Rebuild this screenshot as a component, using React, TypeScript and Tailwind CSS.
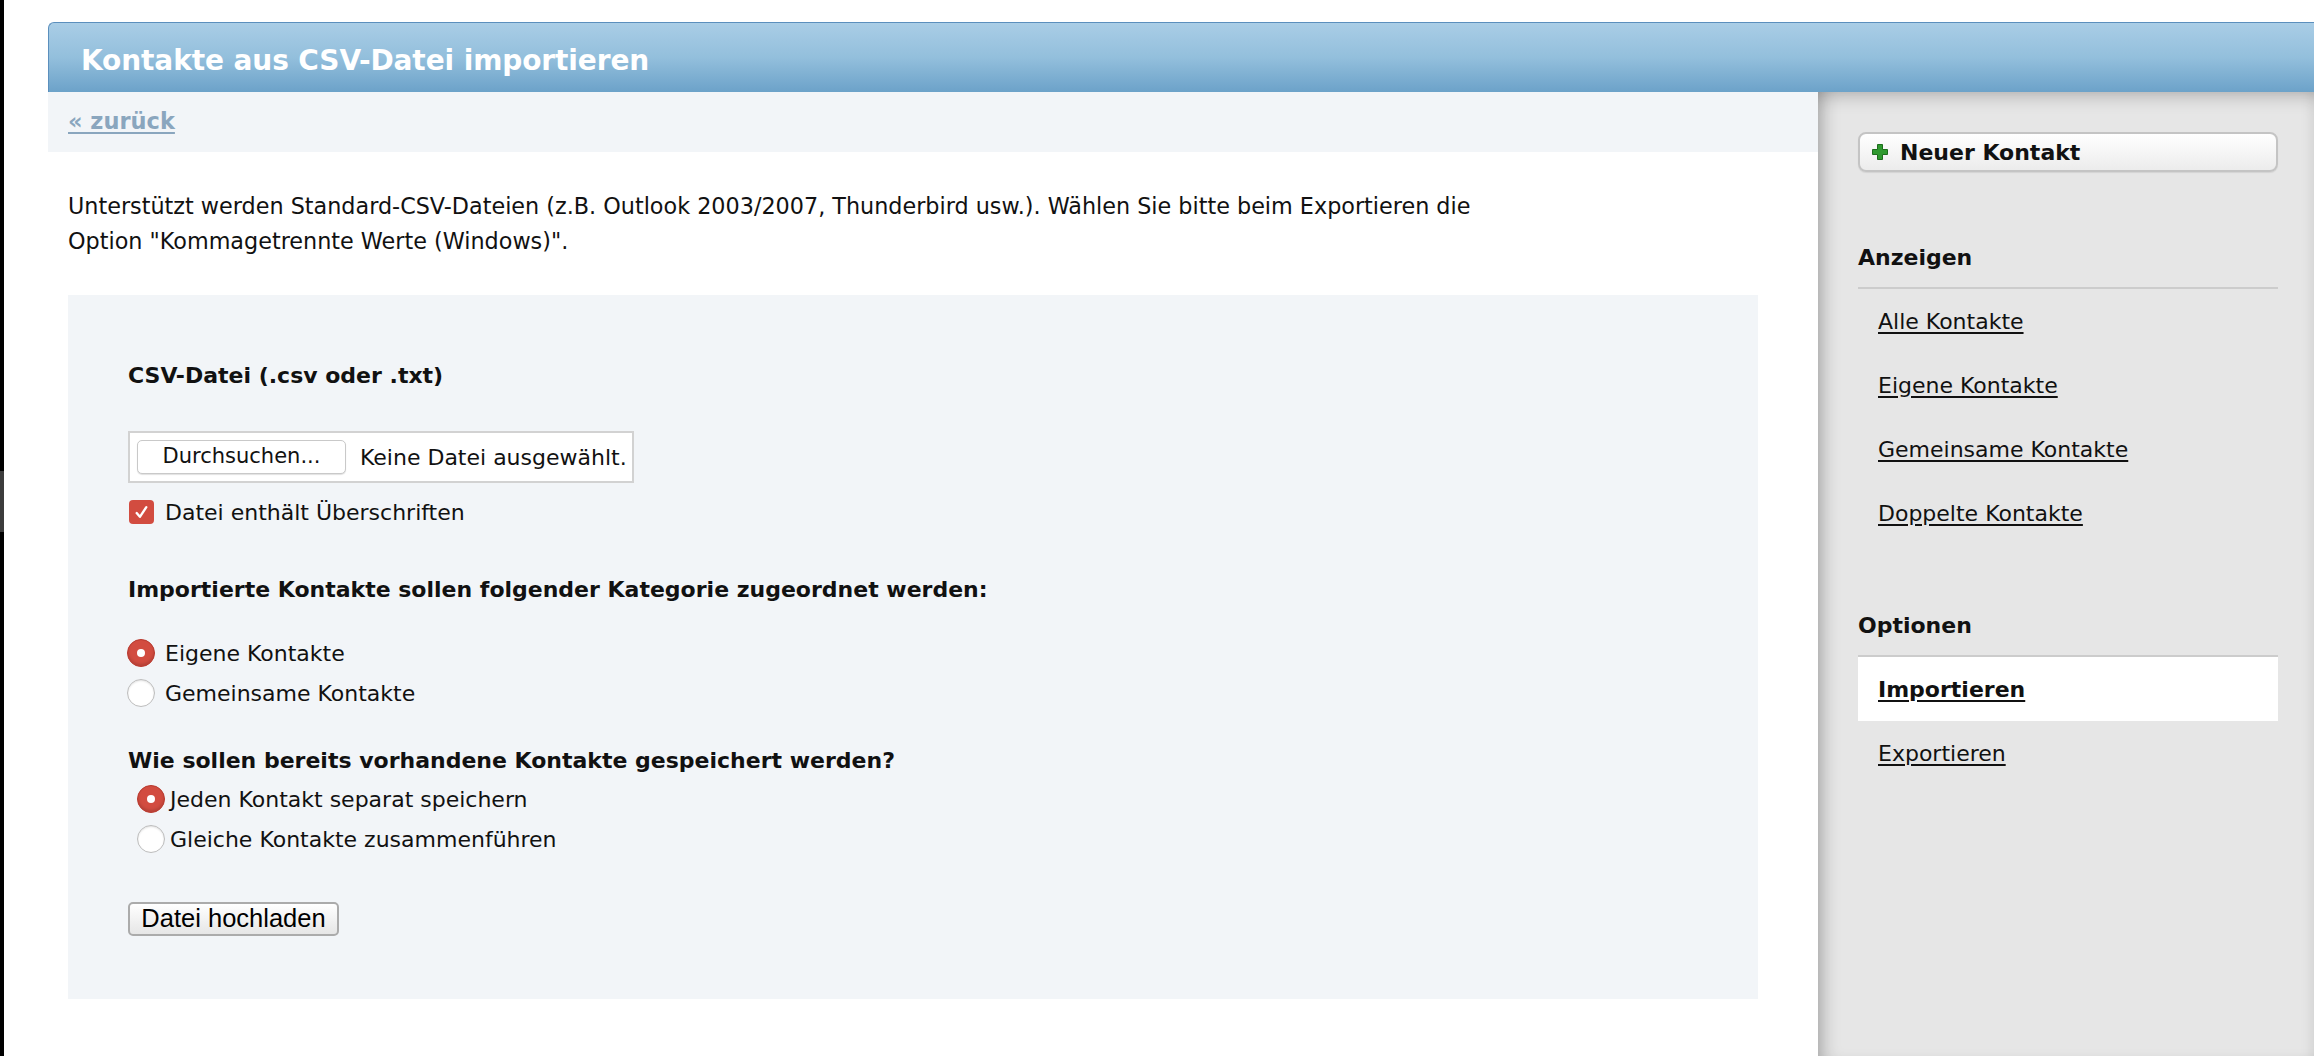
import React from 'react';

const base = "font-[family-name:'DejaVu_Sans',Verdana,sans-serif]";

function PlusIcon() {
  return (
    <svg width="18" height="18" viewBox="0 0 18 18" className="shrink-0">
      <path
        d="M6.5 1.5h5v5h5v5h-5v5h-5v-5h-5v-5h5z"
        fill="#2f9a2f"
        stroke="#1c6e1c"
        strokeWidth="1"
      />
    </svg>
  );
}

function Radio({ checked }: { checked?: boolean }) {
  if (checked) {
    return (
      <span className="w-[28px] h-[28px] rounded-full bg-[#d24c40] border border-[#b8392e] flex items-center justify-center shrink-0 shadow-[inset_0_-2px_3px_rgba(0,0,0,0.15)]">
        <span className="w-[8px] h-[8px] rounded-full bg-white" />
      </span>
    );
  }
  return (
    <span className="w-[28px] h-[28px] rounded-full bg-white border-[1.5px] border-[#bdbdbd] shrink-0 shadow-[inset_0_1px_2px_rgba(0,0,0,0.12)]" />
  );
}

function SideLink({ label, active }: { label: string; active?: boolean }) {
  return (
    <div className={`h-[64px] flex items-center pl-[20px] ${active ? 'bg-white' : ''}`}>
      <a href="#" className={`text-[22px] text-[#111] underline underline-offset-[3px] ${active ? 'font-bold' : ''}`}>
        {label}
      </a>
    </div>
  );
}

export default function App() {
  return (
    <div className={`${base} flex w-full min-h-[1056px] bg-white text-[#111]`}>
      <div className="w-[4px] flex flex-col shrink-0">
        <div className="h-[471px] bg-black" />
        <div className="h-[61px] bg-[#3c3c3c]" />
        <div className="flex-1 bg-black" />
      </div>

      <div className="ml-[44px] flex-1 flex flex-col pt-[22px]">
        <div className="h-[70px] rounded-tl-[6px] border-t border-l border-[#5b8fbd] bg-gradient-to-b from-[#a9cde6] via-[#93bfdc] to-[#6ca2c9] flex items-center pl-[32px] pt-[6px]">
          <h1 className="text-white font-bold text-[28px] leading-none tracking-[-0.1px]">Kontakte aus CSV-Datei importieren</h1>
        </div>

        <div className="flex flex-1">
          <div className="flex-1">
            <div className="h-[60px] bg-[#f2f5f8] flex items-center pl-[20px]">
              <a href="#" className="text-[22.5px] font-bold text-[#8aa6be] underline underline-offset-[3px]">
                « zurück
              </a>
            </div>

            <p className="mt-[37px] pl-[20px] text-[22.3px] leading-[35px]">
              Unterstützt werden Standard-CSV-Dateien (z.B. Outlook 2003/2007, Thunderbird usw.). Wählen Sie bitte beim Exportieren die
              <br />
              Option "Kommagetrennte Werte (Windows)".
            </p>

            <div className="mt-[36px] ml-[20px] w-[1690px] h-[704px] bg-[#f2f5f8] pl-[60px] pt-[66px]">
              <h2 className="text-[22px] leading-[30px] font-bold">CSV-Datei (.csv oder .txt)</h2>

              <div className="mt-[40px] w-[506px] h-[52px] border-2 border-[#d2d2d2] bg-white flex items-center pl-[7px] gap-[14px]">
                <div className="w-[209px] h-[34px] rounded-[5px] border border-[#c9c9c9] bg-white shadow-[0_1px_1px_rgba(0,0,0,0.12)] flex items-center justify-center text-[21px]">
                  Durchsuchen...
                </div>
                <span className="text-[22px] whitespace-nowrap">Keine Datei ausgewählt.</span>
              </div>

              <label className="mt-[14px] flex items-center h-[30px]">
                <span className="ml-[1px] w-[25px] h-[24px] rounded-[4px] bg-[#d24c40] flex items-center justify-center shrink-0">
                  <svg width="15" height="15" viewBox="0 0 14 14">
                    <path d="M2.5 7.5l3 3.5 6-9" fill="none" stroke="white" strokeWidth="2.2" strokeLinecap="round" strokeLinejoin="round" />
                  </svg>
                </span>
                <span className="ml-[11px] text-[22px]">Datei enthält Überschriften</span>
              </label>

              <h2 className="mt-[48px] text-[22px] leading-[30px] font-bold">
                Importierte Kontakte sollen folgender Kategorie zugeordnet werden:
              </h2>

              <div className="mt-[33px] flex flex-col gap-[10px]">
                <label className="flex items-center h-[30px] -ml-[1px]">
                  <Radio checked />
                  <span className="ml-[10px] text-[22px]">Eigene Kontakte</span>
                </label>
                <label className="flex items-center h-[30px] -ml-[1px]">
                  <Radio />
                  <span className="ml-[10px] text-[22px]">Gemeinsame Kontakte</span>
                </label>
              </div>

              <h2 className="mt-[38px] text-[22px] leading-[30px] font-bold">
                Wie sollen bereits vorhandene Kontakte gespeichert werden?
              </h2>

              <div className="mt-[8px] flex flex-col gap-[10px]">
                <label className="flex items-center h-[30px] ml-[9px]">
                  <Radio checked />
                  <span className="ml-[5px] text-[22px]">Jeden Kontakt separat speichern</span>
                </label>
                <label className="flex items-center h-[30px] ml-[9px]">
                  <Radio />
                  <span className="ml-[5px] text-[22px]">Gleiche Kontakte zusammenführen</span>
                </label>
              </div>

              <button className="mt-[48px] w-[211px] h-[34px] rounded-[5px] border-2 border-[#ababab] bg-gradient-to-b from-white to-[#e6e6e6] font-[family-name:'Liberation_Sans',Arial,sans-serif] text-[25.5px] leading-none text-black">
                Datei hochladen
              </button>
            </div>
          </div>

          <aside className="w-[496px] shrink-0 bg-[#e6e6e6] pl-[40px] pr-[36px] pt-[40px] shadow-[inset_16px_0_18px_-12px_rgba(0,0,0,0.28),inset_0_16px_18px_-12px_rgba(0,0,0,0.22),inset_-14px_0_14px_-12px_rgba(0,0,0,0.08)]">
            <button className="w-full h-[40px] rounded-[8px] border-2 border-[#c4c4c4] bg-gradient-to-b from-white to-[#ececec] flex items-center pl-[11px] gap-[11px] shadow-[0_1px_1px_rgba(0,0,0,0.08)]">
              <PlusIcon />
              <span className="text-[22px] font-bold text-[#111]">Neuer Kontakt</span>
            </button>

            <h3 className="mt-[71px] text-[22px] leading-[30px] font-bold pb-[14px] border-b-2 border-[#cccccc]">Anzeigen</h3>
            <SideLink label="Alle Kontakte" />
            <SideLink label="Eigene Kontakte" />
            <SideLink label="Gemeinsame Kontakte" />
            <SideLink label="Doppelte Kontakte" />

            <h3 className="mt-[66px] text-[22px] leading-[30px] font-bold pb-[14px] border-b-2 border-[#cccccc]">Optionen</h3>
            <SideLink label="Importieren" active />
            <SideLink label="Exportieren" />
          </aside>
        </div>
      </div>
    </div>
  );
}
